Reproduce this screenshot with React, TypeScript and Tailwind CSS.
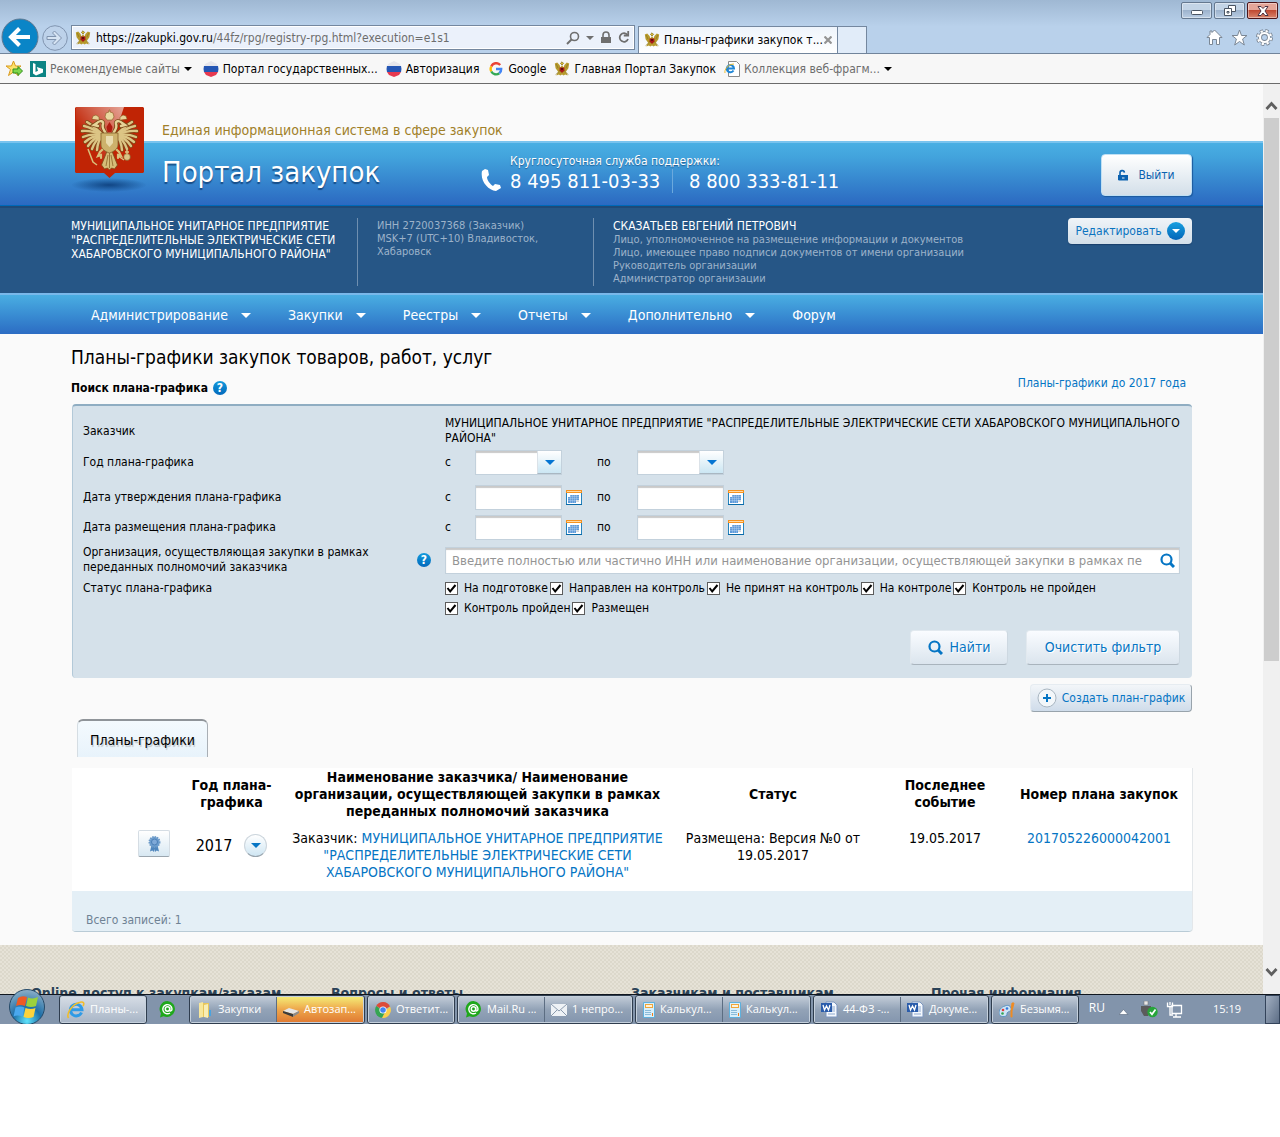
import type { ReactNode } from 'react';

const TASKBAR_FONT = "font-['Open_Sans','Noto_Sans',sans-serif]";
const SITE_FONT = "font-['DejaVu_Sans_Condensed','Noto_Sans',sans-serif]";

const NAV_ITEMS = ['Администрирование', 'Закупки', 'Реестры', 'Отчеты', 'Дополнительно'];

const STATUSES = [
  'На подготовке',
  'Направлен на контроль',
  'Не принят на контроль',
  'На контроле',
  'Контроль не пройден',
  'Контроль пройден',
  'Размещен',
];

const FOOTER_TITLES = [
  'Online доступ к закупкам/заказам',
  'Вопросы и ответы',
  'Заказчикам и поставщикам',
  'Прочая информация',
];

const ORG_NAME =
  'МУНИЦИПАЛЬНОЕ УНИТАРНОЕ ПРЕДПРИЯТИЕ "РАСПРЕДЕЛИТЕЛЬНЫЕ ЭЛЕКТРИЧЕСКИЕ СЕТИ ХАБАРОВСКОГО МУНИЦИПАЛЬНОГО РАЙОНА"';

/* ---------- icons ---------- */

function EagleHalf() {
  const tips = [
    [12, 15], [9, 19], [7, 24], [8, 30], [10, 35], [13, 39], [17, 42], [22, 43],
  ];
  return (
    <g strokeLinecap="round" fill="none">
      {tips.map(([x, y]) => (
        <path key={`${x}-${y}`} d={`M28 28Q${(x + 24) / 2} ${(y + 22) / 2} ${x} ${y}`} stroke="#7b4a18" strokeWidth="3.8" />
      ))}
      {tips.map(([x, y]) => (
        <path key={`${x}-${y}`} d={`M28 28Q${(x + 24) / 2} ${(y + 22) / 2} ${x} ${y}`} stroke="#dcc585" strokeWidth="2.4" />
      ))}
      <path d="M32 30C31 24 26 22 28 17c1-3-3-4-6-1l-3 2 4 1" stroke="#7b4a18" strokeWidth="4" />
      <path d="M32 30C31 24 26 22 28 17c1-3-3-4-6-1l-3 2 4 1" stroke="#e6d298" strokeWidth="2.4" />
      <path d="M17 12l1-3 3-1 3 2 0 3z" fill="#e6d298" stroke="#8a5c22" strokeWidth=".6" />
      <path d="M30 40l-5 5-2 4 3-1 0 3" stroke="#d9c07a" strokeWidth="2.2" />
    </g>
  );
}

function Eagle() {
  return (
    <g>
      <EagleHalf />
      <g transform="translate(69 0) scale(-1 1)">
        <EagleHalf />
      </g>
      <path d="M34.5 38l-8 20 3 4 3-1 2 2 2-2 3 1 3-4z" fill="#d5bd78" stroke="#7b4a18" strokeWidth=".8" />
      <path d="M31 59l2-11M34.500 61V46M38 59l-2-11" stroke="#8a642a" strokeWidth=".8" />
      <path d="M26 26h17v12c0 4-5 7-8.500 8-3.500-1-8.500-4-8.500-8z" fill="#cdb26c" stroke="#87602a" strokeWidth=".8" />
      <path d="M31 29h7v7l-3.500 4-3.500-4z" fill="#e9dcb0" />
      <path d="M34.500 15l3 5-1 5h-4l-1-5z" fill="#b01c10" />
      <path d="M30 10l1-4 3-1v-2h1v2l3 1 1 4-2 3h-5z" fill="#ead8a0" stroke="#8a5c22" strokeWidth=".6" />
      <path d="M13 42l5 13 4 3" stroke="#d9c07a" strokeWidth="1.500" fill="none" />
      <circle cx="52" cy="50" r="3.400" fill="#dcc585" stroke="#7b4a18" strokeWidth=".6" />
      <path d="M52 47v-4M50 45h4M49 53l-6-4" stroke="#dcc585" strokeWidth="1.400" />
    </g>
  );
}

function Emblem() {
  return (
    <svg width="84" height="92" viewBox="-4 0 84 92" aria-hidden="true">
      <defs>
        <linearGradient id="shine" x1="0" y1="1" x2="1" y2="0">
          <stop offset=".35" stopColor="#fff" stopOpacity="0" />
          <stop offset="1" stopColor="#fff" stopOpacity=".6" />
        </linearGradient>
        <radialGradient id="shade">
          <stop offset="0" stopColor="#0d3f7c" stopOpacity=".9" />
          <stop offset="1" stopColor="#0d3f7c" stopOpacity="0" />
        </radialGradient>
      </defs>
      <ellipse cx="34" cy="78" rx="38" ry="7" fill="url(#shade)" />
      <path d="M1 0h67l1 1v64l-1 1H40l-5.500 5L29 66H1l-1-1V1z" fill="#c02405" />
      <path d="M1 0h48L27 66H1z" fill="url(#shine)" />
      <Eagle />
    </svg>
  );
}

function EagleIcon() {
  return (
    <svg width="16" height="16" viewBox="0 0 20 20" className="shrink-0" aria-hidden="true">
      <path d="M1 3l3-1 3 3 1 3 2-3 2 3 1-3 3-3 3 1-1 6-3 4 2 5-3-1-2 1-2-1-2 1-2-1-3 1 2-5-3-4z" fill="#b79a2c" />
      <path d="M3 4l2 5M17 4l-2 5M6 12l2 1M14 12l-2 1M8 3l2-2 2 2-2 2z" stroke="#8d7a22" strokeWidth="1" fill="#d9bb3a" />
      <path d="M2 17l4-3M18 17l-4-3" stroke="#9c8a40" />
      <path d="M7 8h6v4l-3 3-3-3z" fill="#a81818" />
      <path d="M9 9h2v2H9z" fill="#330808" />
    </svg>
  );
}

function FlagIcon() {
  return (
    <svg width="16" height="16" viewBox="0 0 16 16" className="shrink-0" aria-hidden="true">
      <path d="M8 0l6 3 1 3H1l1-3z" fill="#e6e6ec" />
      <path d="M1 5h14l.5 3-.5 3H1L.500 8z" fill="#2456b4" />
      <path d="M1 11h14l-2 3-5 2-5-2z" fill="#e53950" />
    </svg>
  );
}

function IeIcon() {
  return (
    <svg width="18" height="18" viewBox="0 0 18 18" className="shrink-0" aria-hidden="true">
      <path d="M14.500 11.500A5.800 5.800 0 1 1 15 8.800H5" fill="none" stroke="#2f9be6" strokeWidth="3" />
      <path d="M1.500 17C-1 13 5 3 13 1.200c4-1 4.500 1.300 3 4" fill="none" stroke="#f1bd2b" strokeWidth="1.600" />
    </svg>
  );
}

function GoogleIcon() {
  return (
    <svg width="14" height="14" viewBox="0 0 14 14" className="shrink-0" fill="none" strokeWidth="2.400" aria-hidden="true">
      <path d="M11.200 3A5.300 5.300 0 0 0 2.300 4.500" stroke="#ea4335" />
      <path d="M2.300 4.500a5.300 5.300 0 0 0 0 5" stroke="#fbbc05" />
      <path d="M2.300 9.500a5.300 5.300 0 0 0 8 1.700" stroke="#34a853" />
      <path d="M10.300 11.200A5 5 0 0 0 12.200 7H7" stroke="#4285f4" />
    </svg>
  );
}

function ChromeIcon() {
  return (
    <svg width="16" height="16" viewBox="0 0 16 16" className="shrink-0" aria-hidden="true">
      <path d="M8 8L1.200 4A7.800 7.800 0 0 1 15 4.500z" fill="#dd4b39" />
      <path d="M8 8h7a7.500 7.500 0 0 1-8 7.800l4-7z" fill="#fcd04b" />
      <path d="M15 4.500A7.800 7.800 0 0 1 7 15.800L11 8z" fill="#fcd04b" />
      <path d="M1.200 4A7.800 7.800 0 0 0 7 15.800L10 10z" fill="#35a552" />
      <circle cx="8" cy="8" r="3.600" fill="#fff" />
      <circle cx="8" cy="8" r="2.800" fill="#4285f4" />
    </svg>
  );
}

function MailRuIcon() {
  return (
    <svg width="17" height="17" viewBox="0 0 17 17" className="shrink-0" aria-hidden="true">
      <path d="M8.500 0a8 8 0 1 1-4 15.200L1 16.500l1-4A8 8 0 0 1 8.500 0z" fill="#1fa81b" />
      <circle cx="8.500" cy="8" r="2.200" fill="none" stroke="#fff" strokeWidth="1.500" />
      <path d="M10.700 6v3c0 1.600 2.300 1.200 2.300-1A4.600 4.600 0 1 0 11 12" fill="none" stroke="#fff" strokeWidth="1.400" />
    </svg>
  );
}

function FolderIcon() {
  return (
    <svg width="16" height="16" viewBox="0 0 16 16" className="shrink-0" aria-hidden="true">
      <path d="M2 1l4-1v15l-4 1z" fill="#f7e79c" />
      <path d="M6 1h6v14H6z" fill="#e8c65a" />
      <path d="M7 3l4-1v14l-4-1z" fill="#f8edb6" />
      <path d="M12 8h2v6h-2z" fill="#4aa3df" />
    </svg>
  );
}

function ScannerIcon() {
  return (
    <svg width="16" height="16" viewBox="0 0 16 16" className="shrink-0" aria-hidden="true">
      <path d="M0 9l6-3 10 3-6 3z" fill="#e6e6e6" />
      <path d="M0 9l10 3v3L0 11z" fill="#3c3c3c" />
      <path d="M10 12l6-3v2l-6 4z" fill="#8c8c8c" />
    </svg>
  );
}

function EnvelopeIcon() {
  return (
    <svg width="16" height="12" viewBox="0 0 16 12" className="shrink-0" aria-hidden="true">
      <path d="M0 0h16v12H0z" fill="#eef2f6" />
      <path d="M0 0l8 7 8-7M0 12l6-6M16 12l-6-6" fill="none" stroke="#8a9aad" />
    </svg>
  );
}

function CalcIcon() {
  return (
    <svg width="12" height="16" viewBox="0 0 12 16" className="shrink-0" aria-hidden="true">
      <rect width="12" height="16" rx="1" fill="#5fb0dc" />
      <rect x="1" y="1" width="10" height="14" fill="#d9effa" />
      <rect x="2" y="2" width="8" height="4" fill="#f0a53a" />
      <rect x="3" y="3" width="6" height="2" fill="#fdf3da" />
      <path d="M2.500 8.500h6M2.500 10.500h6M2.500 12.500h6" stroke="#3a86b8" strokeDasharray="1 1" />
      <path d="M9 11h1v3H9z" fill="#ef7d1a" />
    </svg>
  );
}

function WordIcon() {
  return (
    <svg width="17" height="17" viewBox="0 0 17 17" className="shrink-0" aria-hidden="true">
      <path d="M5 1h8l3 3v12H5z" fill="#f4f8fd" stroke="#7c96bf" />
      <path d="M10 6h4M10 8h4M7 13h7M10 10h4" stroke="#8fa9cf" />
      <rect y="2" width="11" height="9" fill="#2a5cab" />
      <path d="M2 4l1.500 5 2-4 2 4L9 4" fill="none" stroke="#fff" strokeWidth="1.300" />
    </svg>
  );
}

function PaintIcon() {
  return (
    <svg width="16" height="16" viewBox="0 0 16 16" className="shrink-0" aria-hidden="true">
      <path d="M6 4C2 5 0 8 0 11c0 4 5 4 7 3 2-1 0-3 2-4s4-1 3-4-4-3-6-2z" fill="#cfe4f4" stroke="#5c94c2" />
      <circle cx="4" cy="8" r="1.300" fill="#e23b3b" />
      <circle cx="3.500" cy="11.500" r="1.300" fill="#35a552" />
      <circle cx="8" cy="6.500" r="1.300" fill="#3377dd" />
      <path d="M15 1l-2 8v6h-1V9l1-8z" fill="#ef8b23" stroke="#ef8b23" />
    </svg>
  );
}

function WindowsOrb() {
  return (
    <svg width="40" height="36" viewBox="0 0 40 36" aria-hidden="true">
      <defs>
        <radialGradient id="orb" cx=".5" cy=".9" r=".9">
          <stop offset="0" stopColor="#5fe3fb" />
          <stop offset=".45" stopColor="#1d6fa8" />
          <stop offset="1" stopColor="#8fb0c8" />
        </radialGradient>
      </defs>
      <circle cx="20" cy="18" r="17.500" fill="url(#orb)" stroke="#264a68" />
      <path d="M11 9q4-3 9-1l-2 9q-5-2-9 0z" fill="#ee5a24" />
      <path d="M21 8.500q5 2 10-.5l-2 9q-5 2-10 0z" fill="#9bd13c" />
      <path d="M8.500 18.500q5-2 9 0l-2 9q-5-2-9 0z" fill="#4aa8ee" />
      <path d="M18.500 19q5 2 10 0l-2 9q-5 2-10 0z" fill="#fcd33c" />
    </svg>
  );
}

function SearchIcon() {
  return (
    <svg width="15" height="15" viewBox="0 0 15 15" className="shrink-0" fill="none" stroke="#0575c4" strokeWidth="2.200" aria-hidden="true">
      <circle cx="6.500" cy="6.500" r="5" />
      <path d="M10 10l4 4" strokeWidth="3" />
    </svg>
  );
}

function CaretDown({ className = 'fill-white', size = 10 }: { className?: string; size?: number }) {
  return (
    <svg width={size} height={size / 2} viewBox="0 0 10 5" className={`shrink-0 ${className}`} aria-hidden="true">
      <path d="M0 0h10L5 5z" />
    </svg>
  );
}

function HelpIcon() {
  return (
    <button
      type="button"
      aria-label="Справка"
      className="flex size-[14px] shrink-0 items-center justify-center rounded-full bg-linear-to-b from-[#149bdd] to-[#0468bb] text-[12px] leading-none font-bold text-white"
    >
      ?
    </button>
  );
}

function CalendarButton({ label }: { label: string }) {
  return (
    <button type="button" aria-label={label} className="ml-1">
      <svg width="16" height="15" viewBox="0 0 16 15" aria-hidden="true">
        <path d="M.5.500h15v14H.5z" fill="#fff" stroke="#2583bd" />
        <path d="M0 0h16v3H0z" fill="#f7931e" />
        <path d="M1 1.500h14" stroke="#fcd9a8" />
        <path d="M4 5h9v5h-3v3H2V7h2z" fill="#5f9bdb" />
        <path d="M10 10h3v2h-3z" fill="#d0d4d8" />
        <path d="M2 6.500h11M2 8.500h11M2 10.500h11M4.500 5v8M6.500 5v8M8.500 5v8M10.500 5v8" stroke="#fff" strokeWidth=".4" opacity=".6" />
        <path d="M0 14h16v1H0z" fill="#0a6aa8" />
      </svg>
    </button>
  );
}

/* ---------- browser window ---------- */

function WindowButton({ label, close, children }: { label: string; close?: boolean; children: ReactNode }) {
  return (
    <button
      type="button"
      aria-label={label}
      className={`flex h-[17px] w-[31px] items-center justify-center rounded-[2px] border shadow-[inset_0_0_0_1px_rgba(255,255,255,0.4)] ${
        close
          ? 'border-[#4c1519] bg-[linear-gradient(#e5a699_50%,#c04a32_50%,#d9856d)]'
          : 'border-[#65788f] bg-[linear-gradient(#c3d4e6_50%,#9db3cd_50%,#b9cde3)]'
      }`}
    >
      {children}
    </button>
  );
}

function BrowserBar() {
  return (
    <div className="flex h-[54px] items-end overflow-hidden border-b border-[#71849b] bg-linear-to-b from-[#9fb8d3] to-[#b9d1eb] to-50%">
      <div className="flex w-[71px] shrink-0 items-end">
        <button type="button" aria-label="Назад" className="-mb-[3px]">
          <svg width="40" height="38" viewBox="0 0 40 38">
            <circle cx="20" cy="19" r="18" fill="#0a85c7" stroke="#5f7790" />
            <path d="M30 19H12M19.500 10.500L11 19l8.500 8.500" fill="none" stroke="#fff" strokeWidth="4" />
          </svg>
        </button>
        <button type="button" aria-label="Вперед" className="mb-[2px] ml-[2px]">
          <svg width="26" height="26" viewBox="0 0 26 26" fill="none">
            <circle cx="13" cy="13" r="12.300" stroke="#8195b0" fill="#bdd2ea" />
            <path d="M5 11.500h9l-3.500-3.500 2-2 7 7-7 7-2-2 3.500-3.500H5z" fill="#d6e4f3" stroke="#7f93ae" />
          </svg>
        </button>
      </div>
      <div className="mb-[3px] flex h-[25px] w-[564px] shrink-0 items-center border border-[#74879f] bg-[#ebf1fb] pr-1 pl-[3px] shadow-[inset_0_0_0_1px_#fff]">
        <EagleIcon />
        <p className="ml-[5px] flex-1 text-[12px] whitespace-nowrap text-[#6d6d6d]">
          <span className="text-black">https://zakupki.gov.ru</span>/44fz/rpg/registry-rpg.html?execution=e1s1
        </p>
        <div className="flex items-center gap-[6px] text-[#6f6f6f]">
          <svg width="14" height="14" viewBox="0 0 14 14" fill="none" stroke="currentColor">
            <circle cx="8.500" cy="5.500" r="4" strokeWidth="1.600" />
            <path d="M5.500 8.500L1 13" strokeWidth="2" />
          </svg>
          <CaretDown size={8} className="fill-[#6f6f6f]" />
          <svg width="12" height="13" viewBox="0 0 12 13">
            <path d="M3 6V4a3 3 0 0 1 6 0v2" fill="none" stroke="currentColor" strokeWidth="1.600" />
            <path d="M1 6h10v6H1z" fill="currentColor" />
          </svg>
          <svg width="12" height="13" viewBox="0 0 12 13" fill="none" stroke="currentColor" strokeWidth="1.800">
            <path d="M9.500 4A4.300 4.300 0 1 0 10 8" />
            <path d="M10.200 0v4.500H5.800" />
          </svg>
        </div>
      </div>
      <div className="ml-[3px] flex h-[27px] w-[200px] shrink-0 items-center border border-b-0 border-[#74879f] bg-linear-to-b from-[#eef4fb] to-white px-[5px] text-[12px] text-black">
        <EagleIcon />
        <span className="ml-1 flex-1 whitespace-nowrap">Планы-графики закупок т...</span>
        <svg width="8" height="8" viewBox="0 0 8 8" stroke="#949494" strokeWidth="2.200">
          <path d="M.5.500l7 7M7.500.500l-7 7" />
        </svg>
      </div>
      <div className="h-[27px] w-[29px] shrink-0 border border-b-0 border-l-0 border-[#74879f] bg-[#e1ecf9]" />
      <div className="flex h-full flex-1 flex-col items-end justify-between pt-[2px] pb-[7px]">
        <div className="flex gap-[2px] pr-[2px]">
          <WindowButton label="Свернуть">
            <svg width="12" height="6" viewBox="0 0 12 6" className="mt-1"><rect x=".5" y=".5" width="11" height="4" rx="1" fill="#fff" stroke="#4b5563" /></svg>
          </WindowButton>
          <WindowButton label="Восстановить">
            <svg width="12" height="11" viewBox="0 0 12 11" fill="#fff" stroke="#4b5563">
              <path d="M4.500.500h7v6h-7z" />
              <path d="M.5 3.500h7v7h-7zM3 6.500h2v1.500H3z" />
            </svg>
          </WindowButton>
          <WindowButton label="Закрыть" close>
            <svg width="12" height="10" viewBox="0 0 12 10">
              <path d="M1 .5h3l2 2 2-2h3L8 5l3 4.500H8L6 7 4 9.500H1L4 5z" fill="#fff" stroke="#4b3040" />
            </svg>
          </WindowButton>
        </div>
        <div className="flex gap-2 pr-[7px]">
          <svg width="17" height="17" viewBox="0 0 17 17" fill="#fff" stroke="#7b8795">
            <path d="M8.500 1L16 8.500h-2.500v7h-3v-5h-4v5h-3v-7H1L4 5.500V2h2v1.500z" />
          </svg>
          <svg width="17" height="17" viewBox="0 0 17 17" fill="#fff" stroke="#7b8795">
            <path d="M8.500 1l2 5.500h5.500l-4.400 3.500 1.700 6-4.800-3.500L3.700 16l1.700-6L1 6.500h5.500z" />
          </svg>
          <svg width="17" height="17" viewBox="0 0 17 17">
            <circle cx="8.500" cy="8.500" r="6.500" fill="none" stroke="#7b8795" strokeWidth="4" strokeDasharray="3 2.100" />
            <circle cx="8.500" cy="8.500" r="4.500" fill="none" stroke="#7b8795" strokeWidth="4" />
            <circle cx="8.500" cy="8.500" r="6.500" fill="none" stroke="#fff" strokeWidth="2.200" strokeDasharray="2.200 2.900" strokeDashoffset="-.4" />
            <circle cx="8.500" cy="8.500" r="4.500" fill="none" stroke="#fff" strokeWidth="2.200" />
          </svg>
        </div>
      </div>
    </div>
  );
}

function FavoritesBar() {
  return (
    <div className="flex h-[30px] items-center border-b border-[#6b6b6b] bg-[#f7f7f7] pl-[6px] text-[12px] whitespace-nowrap text-black">
      <button type="button" aria-label="Добавить в избранное">
        <svg width="17" height="17" viewBox="0 0 17 17">
          <path d="M7.500 1l2 5h5.500l-4.500 3.500 2 6-5-3.500-5 3.500 2-6L0 6h5.500z" fill="#fce36a" stroke="#d99a1e" />
          <path d="M7 9h5V6.500l4.500 4.500L12 15.500V13H7z" fill="#7fd64a" stroke="#2f8f1f" />
        </svg>
      </button>
      <a href="#" className="ml-[7px] flex items-center gap-1 text-[#6d6d6d]">
        <svg width="16" height="16" viewBox="0 0 16 16">
          <path d="M0 0h16v16H0z" fill="#0c8484" />
          <path d="M3 2l2.500 1v8l2.500-1.200L6.800 6 13 8v3.500L6 14.500l-3-2z" fill="#fff" />
        </svg>
        Рекомендуемые сайты
        <CaretDown size={8} className="fill-black" />
      </a>
      <a href="#" className="ml-[11px] flex items-center gap-1"><FlagIcon />Портал государственных...</a>
      <a href="#" className="ml-2 flex items-center gap-1"><FlagIcon />Авторизация</a>
      <a href="#" className="ml-[10px] flex items-center gap-[5px]"><GoogleIcon />Google</a>
      <a href="#" className="ml-2 flex items-center gap-1"><EagleIcon />Главная Портал Закупок</a>
      <a href="#" className="ml-2 flex items-center gap-1 text-[#6d6d6d]">
        <svg width="16" height="16" viewBox="0 0 16 16">
          <path d="M4.500.500h8l3 3v12h-11z" fill="#fff" stroke="#8a8a8a" />
          <path d="M9.500 9.500A3.600 3.600 0 1 1 10 7.500H3.500" fill="none" stroke="#1f86d6" strokeWidth="2" />
          <path d="M1 12c-1-3 3-9 9-9" fill="none" stroke="#f1bd2b" />
        </svg>
        Коллекция веб-фрагм...
        <CaretDown size={8} className="fill-black" />
      </a>
    </div>
  );
}

function Scrollbar() {
  return (
    <div className="flex w-[17px] shrink-0 flex-col items-center bg-[#f0f0f0]">
      <svg width="13" height="34" viewBox="0 0 13 34" fill="none" stroke="#5f5f5f" strokeWidth="2.800">
        <path d="M1.500 25L6.500 19.500l5 5.500" />
      </svg>
      <div className="h-[543px] w-[15px] bg-[#cdcdcd]" />
      <svg width="13" height="34" viewBox="0 0 13 34" className="mt-auto" fill="none" stroke="#5f5f5f" strokeWidth="2.800">
        <path d="M1.500 9L6.500 14.500l5-5.500" />
      </svg>
    </div>
  );
}

/* ---------- site ---------- */

function SiteHeader() {
  return (
    <header>
      <div className="flex h-[122px] bg-[linear-gradient(#fafafa_57px,#79c3ee_57px,#79c3ee_59px,#49afe3_59px,#42a3dc_60%,#2b69c1_121px,#0069b9_121px)] px-[71px]">
        <div className="w-[91px] shrink-0 pt-[23px]">
          <Emblem />
        </div>
        <div className="w-[319px] shrink-0 whitespace-nowrap">
          <p className="pt-9 text-[14px] leading-5 text-[#a08029]">Единая информационная система в сфере закупок</p>
          <p className="mt-3 text-[29px] leading-10 text-white [text-shadow:0_2px_1px_rgba(0,40,90,0.6)]">Портал закупок</p>
        </div>
        <div className="flex flex-1 items-start pt-[69px] text-white">
          <svg width="20" height="22" viewBox="0 0 20 22" className="mt-4" aria-hidden="true">
            <path d="M4 0L1 2C-1 12 7 21 15 22l5-3-1-3-5-1-2 2C9 15 6 11 6 8l2-2-1-5z" fill="#fff" />
          </svg>
          <div className="ml-[9px] whitespace-nowrap">
            <p className="text-[12px] leading-4 [text-shadow:0_1px_1px_rgba(0,40,90,0.5)]">Круглосуточная служба поддержки:</p>
            <div className="flex text-[20px] leading-6">
              <span className="w-[163px] border-r border-[#6ba9dd]">8 495 811-03-33</span>
              <span className="pl-4">8 800 333-81-11</span>
            </div>
          </div>
        </div>
        <button
          type="button"
          className="mt-[70px] flex h-[42px] w-[91px] items-center justify-center gap-[9px] rounded border border-[#bfe0f4] bg-linear-to-b from-white to-[#d3dfe9] text-[12px] text-[#0b62b0] shadow-[1px_1px_1px_#1d5a9e]"
        >
          <svg width="11" height="12" viewBox="0 0 11 12" aria-hidden="true">
            <path d="M2 6V4a2.200 2.200 0 0 1 4.400-.4" fill="none" stroke="#0b62b0" strokeWidth="1.600" />
            <path d="M0 6h10v5.500H1L0 11zM4 8.500v1h2.500v-1z" fill="#0b62b0" fillRule="evenodd" />
          </svg>
          Выйти
        </button>
      </div>

      <div className="flex h-[87px] items-start border-t-2 border-[#1e4a78] bg-[#265686] px-[71px] pt-[10px] text-[11px] leading-[13px] text-[#9db3ca]">
        <p className="h-[68px] w-[287px] shrink-0 border-r border-[#6f8fb0] pt-px text-[12px] leading-[14px] text-white">
          МУНИЦИПАЛЬНОЕ УНИТАРНОЕ ПРЕДПРИЯТИЕ<br />
          "РАСПРЕДЕЛИТЕЛЬНЫЕ ЭЛЕКТРИЧЕСКИЕ СЕТИ<br />
          ХАБАРОВСКОГО МУНИЦИПАЛЬНОГО РАЙОНА"
        </p>
        <p className="h-[68px] w-[236px] shrink-0 border-r border-[#6f8fb0] pt-px pr-10 pl-[19px]">
          ИНН 2720037368 (Заказчик)<br />
          MSK+7 (UTC+10) Владивосток, Хабаровск
        </p>
        <div className="flex-1 pt-px pl-[19px] whitespace-nowrap">
          <p className="text-[12px] leading-[14px] text-white">СКАЗАТЬЕВ ЕВГЕНИЙ ПЕТРОВИЧ</p>
          <p>Лицо, уполномоченное на размещение информации и документов</p>
          <p>Лицо, имеющее право подписи документов от имени организации</p>
          <p>Руководитель организации</p>
          <p>Администратор организации</p>
        </div>
        <button
          type="button"
          className="flex h-[26px] w-[124px] items-center justify-center gap-[5px] rounded bg-linear-to-b from-[#f0f4f8] to-[#d3dfe9] text-[12px] text-[#0b73c0] shadow-[0_1px_1px_#1a406c]"
        >
          Редактировать
          <span className="flex size-[18px] items-center justify-center rounded-full bg-linear-to-b from-[#1aa0e0] to-[#0465b8]">
            <CaretDown size={8} />
          </span>
        </button>
      </div>

      <nav className="flex h-[41px] items-center gap-[37px] border-t-2 border-[#79b8ea] bg-linear-to-b from-[#4aaee2] to-[#2c6cc3] px-[91px] pt-[2px] text-[14px] text-white">
        {NAV_ITEMS.map((item) => (
          <button key={item} type="button" className="flex items-center gap-[13px]">
            {item}
            <CaretDown />
          </button>
        ))}
        <a href="#">Форум</a>
      </nav>
    </header>
  );
}

function FieldRow({ label, className, children }: { label: string; className: string; children: ReactNode }) {
  return (
    <div className={`grid grid-cols-[362px_1fr] items-center ${className}`}>
      <span>{label}</span>
      {children}
    </div>
  );
}

const FIELD_CLASS =
  'h-[25px] w-[87px] appearance-none border border-[#c3d1dc] bg-white px-1 shadow-[inset_0_2px_1px_#c9c9c9] outline-none';

function YearSelect({ label }: { label: string }) {
  return (
    <span className="relative flex w-[87px]">
      <select aria-label={label} className={FIELD_CLASS} defaultValue="">
        <option value="" />
        <option value="2017">2017</option>
      </select>
      <span className="pointer-events-none absolute top-px right-px flex h-[23px] w-[24px] items-center justify-center border-b border-l border-[#a9b7c2] border-l-[#dbe2e8] bg-linear-to-b from-white to-[#cbe6f3]">
        <CaretDown className="fill-[#0575d2]" />
      </span>
    </span>
  );
}

function DateInput({ label }: { label: string }) {
  return (
    <span className="flex items-center">
      <input type="text" aria-label={label} className={FIELD_CLASS} />
      <CalendarButton label={`Календарь: ${label}`} />
    </span>
  );
}

function Range({ from, to }: { from: ReactNode; to: ReactNode }) {
  return (
    <div className="grid grid-cols-[30px_122px_40px_1fr] items-center">
      <span>с</span>
      {from}
      <span>по</span>
      {to}
    </div>
  );
}

function StatusCheckbox({ label }: { label: string }) {
  return (
    <label className="flex items-center gap-[6px] leading-5 whitespace-nowrap">
      <span className="relative flex">
        <input type="checkbox" defaultChecked className="peer size-[13px] appearance-none border border-[#5c5c5c] bg-white" />
        <svg
          width="13"
          height="13"
          viewBox="0 0 13 13"
          className="pointer-events-none absolute inset-0 hidden peer-checked:block"
          fill="none"
          stroke="#000"
          strokeWidth="2"
        >
          <path d="M2.500 6l2.700 3.500L10.500 3" />
        </svg>
      </span>
      {label}
    </label>
  );
}

const PANEL_BUTTON =
  'flex h-[35px] items-center justify-center gap-[7px] rounded border border-t-[#e2e9ef] border-r-[#cdd8e1] border-b-[#a9b4bd] border-l-[#e2e9ef] bg-linear-to-b from-[#fafcff] to-[#dbe5ee] whitespace-nowrap [text-shadow:1px_1px_0_#fff]';

function SearchPanel() {
  return (
    <form
      className="ml-px rounded border-t-2 border-l border-[#8fadc2] border-l-[#b3c9d8] bg-[#d5e1ea] pt-[10px] pr-3 pb-[13px] pl-[10px] text-[12px] leading-[15px] text-black"
      onSubmit={(e) => e.preventDefault()}
    >
      <FieldRow label="Заказчик" className="">
        <p className="-mr-2">{ORG_NAME}</p>
      </FieldRow>
      <FieldRow label="Год плана-графика" className="mt-1">
        <Range from={<YearSelect label="Год плана-графика с" />} to={<YearSelect label="Год плана-графика по" />} />
      </FieldRow>
      <FieldRow label="Дата утверждения плана-графика" className="mt-[10px]">
        <Range from={<DateInput label="Дата утверждения с" />} to={<DateInput label="Дата утверждения по" />} />
      </FieldRow>
      <FieldRow label="Дата размещения плана-графика" className="mt-[5px]">
        <Range from={<DateInput label="Дата размещения с" />} to={<DateInput label="Дата размещения по" />} />
      </FieldRow>
      <div className="mt-[5px] flex items-center">
        <label htmlFor="org" className="w-[334px] shrink-0 pr-8">
          Организация, осуществляющая закупки в рамках<br />переданных полномочий заказчика
        </label>
        <HelpIcon />
        <div className="ml-[14px] flex h-[27px] flex-1 items-center border border-[#c3d1dc] bg-white pr-1 pl-[6px] shadow-[inset_0_2px_1px_#c9c9c9]">
          <input
            id="org"
            type="text"
            placeholder="Введите полностью или частично ИНН или наименование организации, осуществляющей закупки в рамках пе"
            className="min-w-0 flex-1 bg-transparent text-[13px] outline-none placeholder:text-[#949494]"
          />
          <button type="button" aria-label="Найти организацию"><SearchIcon /></button>
        </div>
      </div>
      <fieldset className="mt-[3px] grid grid-cols-[362px_1fr] items-start">
        <legend className="contents"><span className="leading-5">Статус плана-графика</span></legend>
        <div className="flex flex-wrap gap-x-[2px]">
          {STATUSES.map((status) => (
            <StatusCheckbox key={status} label={status} />
          ))}
        </div>
      </fieldset>
      <div className="mt-3 flex justify-end gap-[18px] text-[14px] text-[#0575c4]">
        <button type="submit" className={`w-[98px] ${PANEL_BUTTON}`}>
          <SearchIcon />
          Найти
        </button>
        <button type="reset" className={`w-[154px] ${PANEL_BUTTON}`}>Очистить фильтр</button>
      </div>
    </form>
  );
}

function PlansTable() {
  return (
    <div className="ml-px overflow-hidden rounded-b border-b border-[#b9cbd6] bg-white shadow-[1px_0_0_#e3e7ea]">
      <table className="w-full table-fixed text-center text-[14px] leading-[17px] text-black">
        <colgroup>
          <col className="w-[106px]" />
          <col className="w-[107px]" />
          <col />
          <col className="w-[206px]" />
          <col className="w-[138px]" />
          <col className="w-[178px]" />
        </colgroup>
        <thead>
          <tr>
            <td />
            <th>Год плана-<br />графика</th>
            <th className="pt-px">
              Наименование заказчика/ Наименование<br />
              организации, осуществляющей закупки в рамках<br />
              переданных полномочий заказчика
            </th>
            <th>Статус</th>
            <th>Последнее<br />событие</th>
            <th className="pr-2">Номер плана закупок</th>
          </tr>
        </thead>
        <tbody>
          <tr className="align-top">
            <td className="pt-[10px] pl-[66px]">
              <button
                type="button"
                aria-label="Электронная подпись"
                className="flex h-[27px] w-[32px] items-center justify-center rounded-[2px] border border-[#d5dde4] border-b-[#9aa5ae] bg-linear-to-b from-white to-[#d8e8f2]"
              >
                <svg width="13" height="16" viewBox="0 0 13 16" aria-hidden="true">
                  <path d="M3.500 9L2 15.500l2.300-1L6 16l.5-3 .5 3 1.700-1.500 2.300 1L9.500 9z" fill="#4f86bd" />
                  <circle cx="6.500" cy="6" r="5" fill="#6c9fd2" stroke="#6c9ac8" strokeWidth="2" strokeDasharray="1.500 .8" />
                  <circle cx="6.500" cy="6" r="3" fill="#7fa9d8" stroke="#4c7fb5" />
                </svg>
              </button>
            </td>
            <td className="pt-[14px]">
              <div className="flex items-center justify-center gap-3 text-[16px]">
                2017
                <button
                  type="button"
                  aria-label="Действия"
                  className="flex size-[23px] items-center justify-center rounded-full border border-[#cdd6dd] border-b-[#98a4ad] bg-linear-to-b from-white to-[#cfe6f3]"
                >
                  <CaretDown className="fill-[#0575c4]" />
                </button>
              </div>
            </td>
            <td className="h-[71px] pt-[10px]">
              Заказчик:{' '}
              <a href="#" className="text-[#0575c4]">
                МУНИЦИПАЛЬНОЕ УНИТАРНОЕ ПРЕДПРИЯТИЕ<br />
                "РАСПРЕДЕЛИТЕЛЬНЫЕ ЭЛЕКТРИЧЕСКИЕ СЕТИ<br />
                ХАБАРОВСКОГО МУНИЦИПАЛЬНОГО РАЙОНА"
              </a>
            </td>
            <td className="pt-[10px]">Размещена: Версия №0 от<br />19.05.2017</td>
            <td className="pt-[10px]">19.05.2017</td>
            <td className="pt-[10px] pr-2"><a href="#" className="text-[#0575c4]">201705226000042001</a></td>
          </tr>
        </tbody>
      </table>
      <p className="h-10 bg-[#e4eff6] pt-[22px] pl-[14px] text-[12px] leading-[15px] text-[#6f8294]">Всего записей: 1</p>
    </div>
  );
}

function Site() {
  return (
    <div className="min-w-0 flex-1 bg-[#fafafa]">
      <SiteHeader />
      <main className="px-[71px] pb-[13px]">
        <h1 className="pt-[9px] text-[19px] leading-7 text-black">Планы-графики закупок товаров, работ, услуг</h1>
        <div className="flex h-[33px] items-center justify-between text-[12px]">
          <h2 className="flex items-center gap-[5px] font-bold text-black">
            Поиск плана-графика
            <HelpIcon />
          </h2>
          <a href="#" className="self-start pr-[6px] leading-6 text-[#0575c4]">Планы-графики до 2017 года</a>
        </div>
        <SearchPanel />
        <div className="mt-[6px] flex justify-end">
          <button
            type="button"
            className="flex h-7 w-[162px] items-center justify-center gap-[5px] rounded border border-[#e6ecf1] border-r-[#98a3ac] border-b-[#98a3ac] bg-linear-to-b from-[#f3f6f9] to-[#cfdcea] text-[12px] text-[#0575c4]"
          >
            <svg width="20" height="20" viewBox="0 0 20 20" className="shrink-0" aria-hidden="true">
              <circle cx="10" cy="10" r="9" fill="#f3f7fa" stroke="#a9b6c1" />
              <path d="M10 6v8M6 10h8" stroke="#0575c4" strokeWidth="2" />
            </svg>
            Создать план-график
          </button>
        </div>
        <button
          type="button"
          className="mt-[7px] ml-[6px] flex h-[38px] w-[131px] items-center justify-center rounded-t-md border border-t-2 border-b-0 border-[#d5dde3] border-t-[#8f9499] border-r-[#a9afb5] bg-linear-to-b from-[#f4fafe] to-[#e8f3fb] pt-[2px] text-[14px] text-black [text-shadow:1px_2px_1px_rgba(0,0,0,0.2)]"
        >
          Планы-графики
        </button>
        <div className="mt-[11px]">
          <PlansTable />
        </div>
      </main>
      <footer className="grid h-[49px] grid-cols-4 overflow-hidden bg-[repeating-conic-gradient(#dcd8cb_0_25%,#e6e2d7_0_50%)] bg-size-[4px_4px] pt-[38px] pr-[32px] pl-[31px] text-[14px] leading-5 font-bold whitespace-nowrap text-[#2b4257]">
        {FOOTER_TITLES.map((title) => (
          <h3 key={title}>{title}</h3>
        ))}
      </footer>
    </div>
  );
}

/* ---------- taskbar ---------- */

interface Task {
  title: string;
  icon: ReactNode;
  tone?: 'active' | 'alert';
}

const TASK_GROUPS: Task[][] = [
  [
    { title: 'Закупки', icon: <FolderIcon /> },
    { title: 'Автозап...', icon: <ScannerIcon />, tone: 'alert' },
  ],
  [{ title: 'Ответит...', icon: <ChromeIcon /> }],
  [
    { title: 'Mail.Ru ...', icon: <MailRuIcon /> },
    { title: '1 непро...', icon: <EnvelopeIcon /> },
  ],
  [
    { title: 'Калькул...', icon: <CalcIcon /> },
    { title: 'Калькул...', icon: <CalcIcon /> },
  ],
  [
    { title: '44-ФЗ -...', icon: <WordIcon /> },
    { title: 'Докуме...', icon: <WordIcon /> },
  ],
  [{ title: 'Безымя...', icon: <PaintIcon /> }],
];

function TaskGroup({ tasks }: { tasks: Task[] }) {
  return (
    <div className="flex divide-x divide-[#5c6d82] overflow-hidden rounded-[3px] border border-[#2f3d4e] bg-[#c5d0dc] p-px">
      {tasks.map((task, i) => (
        <button
          key={i}
          type="button"
          className={`flex items-center gap-[5px] pl-[6px] whitespace-nowrap ${tasks.length > 1 ? 'w-[86px]' : 'w-[84px]'} ${
            task.tone === 'alert'
              ? 'bg-linear-to-b from-[#f3ea75] via-[#eda64b] to-[#e07b33]'
              : task.tone === 'active'
                ? 'bg-linear-to-b from-[#d5dce5] to-[#a9b6c7]'
                : 'bg-linear-to-b from-[#c0cad6] via-[#93a3b7] to-[#8496ae]'
          }`}
        >
          {task.icon}
          {task.title}
        </button>
      ))}
    </div>
  );
}

function Taskbar() {
  return (
    <div className={`relative flex h-[30px] items-stretch border-t border-[#10161e] bg-[#8294ab] pl-[59px] text-[11px] text-white ${TASKBAR_FONT}`}>
      <button type="button" aria-label="Пуск" className="absolute bottom-0 left-[7px] h-[35px] overflow-hidden">
        <WindowsOrb />
      </button>
      <TaskGroup tasks={[{ title: 'Планы-...', icon: <IeIcon />, tone: 'active' }]} />
      <button type="button" aria-label="Mail.Ru Агент" className="mx-3 flex items-center">
        <MailRuIcon />
      </button>
      <div className="ml-px flex gap-[2px]">
        {TASK_GROUPS.map((tasks, i) => (
          <TaskGroup key={i} tasks={tasks} />
        ))}
      </div>
      <div className="ml-auto flex items-center text-[12px]">
        <span className="pb-1">RU</span>
        <svg width="10" height="6" viewBox="0 0 10 6" className="mt-1 ml-[14px]">
          <path d="M0 5.500h9L4.500.500z" fill="#fff" stroke="#55657a" strokeWidth=".6" />
        </svg>
        <svg width="17" height="17" viewBox="0 0 17 17" className="ml-3">
          <path d="M3 0h4v4H3z" fill="#e8e8e8" stroke="#777" strokeWidth=".6" />
          <path d="M0 5h10v5l-3 5H3l-3-5z" fill="#5b5b5b" />
          <circle cx="11.500" cy="11" r="5.200" fill="#27a53a" />
          <path d="M9 11l2 2.300L14.500 8.500" fill="none" stroke="#fff" strokeWidth="1.700" />
        </svg>
        <svg width="17" height="16" viewBox="0 0 17 16" className="ml-2" fill="none" stroke="#fff" strokeWidth="1.300">
          <path d="M6 3.500h9.500v8H6zM10 12v3M7 15h8" />
          <path d="M1.500.500v4h5v-4M4 0v3M4 5v8h3" />
        </svg>
        <span className="ml-[30px] text-[11px]">15:19</span>
        <button type="button" aria-label="Показать рабочий стол" className="ml-6 h-full w-[15px] border border-[#33435a] bg-linear-to-br from-[#a3b0c2] to-[#5d6e86]" />
      </div>
    </div>
  );
}

export default function App() {
  return (
    <div className={`bg-white ${SITE_FONT}`}>
      <BrowserBar />
      <FavoritesBar />
      <div className="flex">
        <Site />
        <Scrollbar />
      </div>
      <Taskbar />
    </div>
  );
}
